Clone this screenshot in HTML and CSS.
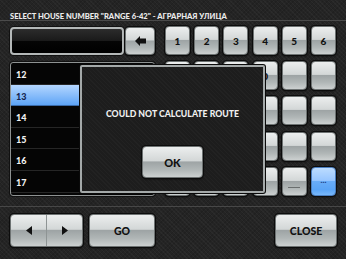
FILE: index.html
```html
<!DOCTYPE html>
<html lang="en">
  <head>
    <meta charset="UTF-8" />
    <title>Select House Number</title>
    <link rel="stylesheet" href="styles.css">
  </head>
  <body>
    <div id="screen">
      <div id="header">SELECT HOUSE NUMBER "RANGE 6-42" - АГРАРНАЯ УЛИЦА</div>

      <div id="main">
        <div id="left-column">
          <div id="input-row">
            <div id="house-input"></div>
            <div id="backspace" class="key">
              <svg width="11" height="10" viewBox="0 0 11 10">
                <path d="M0 5 L5 0 L5 2.5 L11 2.5 L11 7.5 L5 7.5 L5 10 Z" fill="#111" />
              </svg>
            </div>
          </div>
          <div id="number-list">
            <div class="list-row">12</div>
            <div class="list-row selected">13</div>
            <div class="list-row">14</div>
            <div class="list-row">15</div>
            <div class="list-row">16</div>
            <div class="list-row">17</div>
          </div>
        </div>

        <div id="keypad">
          <div class="key">1</div>
          <div class="key">2</div>
          <div class="key">3</div>
          <div class="key">4</div>
          <div class="key">5</div>
          <div class="key">6</div>
          <div class="key">7</div>
          <div class="key">8</div>
          <div class="key">9</div>
          <div class="key">0</div>
          <div class="key"></div>
          <div class="key"></div>
          <div class="key"></div>
          <div class="key"></div>
          <div class="key"></div>
          <div class="key"></div>
          <div class="key"></div>
          <div class="key"></div>
          <div class="key"></div>
          <div class="key"></div>
          <div class="key"></div>
          <div class="key"></div>
          <div class="key"></div>
          <div class="key"></div>
          <div class="key"></div>
          <div class="key"></div>
          <div class="key"></div>
          <div class="key"></div>
          <div class="key dash"><span></span></div>
          <div class="key blue">...</div>
        </div>
      </div>

      <div id="footer">
        <div id="arrows" class="key">
          <div class="arrow-half">
            <svg width="6" height="9" viewBox="0 0 6 9"><path d="M6 0 L0 4.5 L6 9 Z" fill="#111" /></svg>
          </div>
          <div class="arrow-half">
            <svg width="6" height="9" viewBox="0 0 6 9"><path d="M0 0 L6 4.5 L0 9 Z" fill="#111" /></svg>
          </div>
        </div>
        <div id="go-button" class="key">GO</div>
        <div id="close-button" class="key">CLOSE</div>
      </div>

      <div id="dialog">
        <div id="dialog-text">COULD NOT CALCULATE ROUTE</div>
        <div id="ok-button" class="key">OK</div>
      </div>
    </div>
  </body>
</html>
```

FILE: styles.css
```css
body {
  margin: 0;
  font-family: Lato, "DejaVu Sans", sans-serif;
  background-color: #222;
}
#screen {
  position: relative;
  width: 346px;
  height: 259px;
  overflow: hidden;
  background-color: #242424;
  background-image:
    repeating-linear-gradient(45deg, rgba(255, 255, 255, 0.03) 0 1px, transparent 1px 3px),
    repeating-linear-gradient(-45deg, rgba(0, 0, 0, 0.12) 0 1px, transparent 1px 3px);
}
#header {
  height: 21px;
  box-sizing: border-box;
  padding: 11px 0 0 10px;
  font-size: 7.6px;
  font-weight: 900;
  color: #ececec;
  border-bottom: 1px solid #4b4b4b;
  white-space: nowrap;
}
#main {
  display: flex;
  gap: 10px;
  padding: 5px 0 0 10px;
  height: 176px;
  box-sizing: border-box;
}
#left-column {
  display: flex;
  flex-direction: column;
  gap: 7px;
  width: 145px;
  padding-top: 1px;
}
#input-row {
  display: flex;
  gap: 1px;
  height: 28px;
}
#house-input {
  width: 114px;
  box-sizing: border-box;
  border: 2px solid #b4b8b8;
  border-radius: 4px;
  background: linear-gradient(#2c2c2c 0%, #1a1a1a 48%, #050505 52%, #000 100%);
  box-shadow: 0 0 0 1px #111;
}
#backspace {
  width: 30px;
}
#number-list {
  height: 134px;
  box-sizing: border-box;
  border: 1px solid #8e9292;
  border-radius: 3px;
  background-color: #050505;
  overflow: hidden;
  box-shadow: 0 0 0 1px #111;
}
.list-row {
  height: 21.6px;
  box-sizing: border-box;
  padding: 6px 0 0 5px;
  font-size: 9px;
  font-weight: 900;
  color: #f2f2f2;
  border-bottom: 1px solid #262626;
}
.list-row.selected {
  background: linear-gradient(#b4d6ff, #5ea4f6);
  color: #16244e;
  border-bottom-color: #3a6aa8;
}
#keypad {
  display: grid;
  grid-template-columns: repeat(6, 25px);
  grid-template-rows: repeat(5, 29px);
  column-gap: 4.2px;
  row-gap: 6.2px;
}
.key {
  display: flex;
  align-items: center;
  justify-content: center;
  box-sizing: border-box;
  border: 1px solid #6d7272;
  border-radius: 4px;
  background: linear-gradient(#eceeee 0%, #d3d7d7 46%, #9ea4a5 50%, #b0b6b6 75%, #ccd0d0 100%);
  box-shadow: 0 0 0 1px #0c0c0c, 0 1px 2px rgba(0, 0, 0, 0.8);
  font-size: 10px;
  font-weight: 900;
  color: #111;
}
.key.blue {
  background: linear-gradient(#bcdcff 0%, #98c6ff 46%, #68acf8 50%, #5aa4f6 80%, #78b8fa 100%);
  border-color: #4a7ec0;
  color: #1c3a80;
  font-size: 8px;
  padding-bottom: 3px;
}
.key.dash span {
  display: block;
  width: 12px;
  height: 1px;
  margin-top: 12px;
  background-color: #6a6e6e;
}
#footer {
  display: flex;
  gap: 6px;
  margin-top: 9px;
  padding: 7px 9px 0 10px;
  border-top: 1px solid #474747;
}
#arrows {
  width: 73px;
  height: 33px;
  padding: 0;
}
.arrow-half {
  flex: 1;
  height: 100%;
  display: flex;
  align-items: center;
  justify-content: center;
}
.arrow-half + .arrow-half {
  border-left: 1px solid #8e9494;
}
#go-button {
  width: 66px;
  height: 33px;
  font-size: 10.5px;
}
#close-button {
  margin-left: auto;
  width: 62px;
  height: 33px;
  font-size: 10.5px;
}
#dialog {
  position: absolute;
  left: 80px;
  top: 65px;
  width: 185px;
  height: 128px;
  box-sizing: border-box;
  border: 2px solid #a4a9a9;
  border-radius: 2px;
  background-color: #1d1d1d;
  background-image:
    repeating-linear-gradient(45deg, rgba(255, 255, 255, 0.025) 0 1px, transparent 1px 3px);
  box-shadow: 0 0 0 1px #0a0a0a;
  display: flex;
  flex-direction: column;
  align-items: center;
}
#dialog-text {
  margin-top: 41px;
  font-size: 8.7px;
  font-weight: 900;
  color: #f0f0f0;
}
#ok-button {
  margin-top: 27px;
  width: 61px;
  height: 32px;
  font-size: 11px;
}
```
